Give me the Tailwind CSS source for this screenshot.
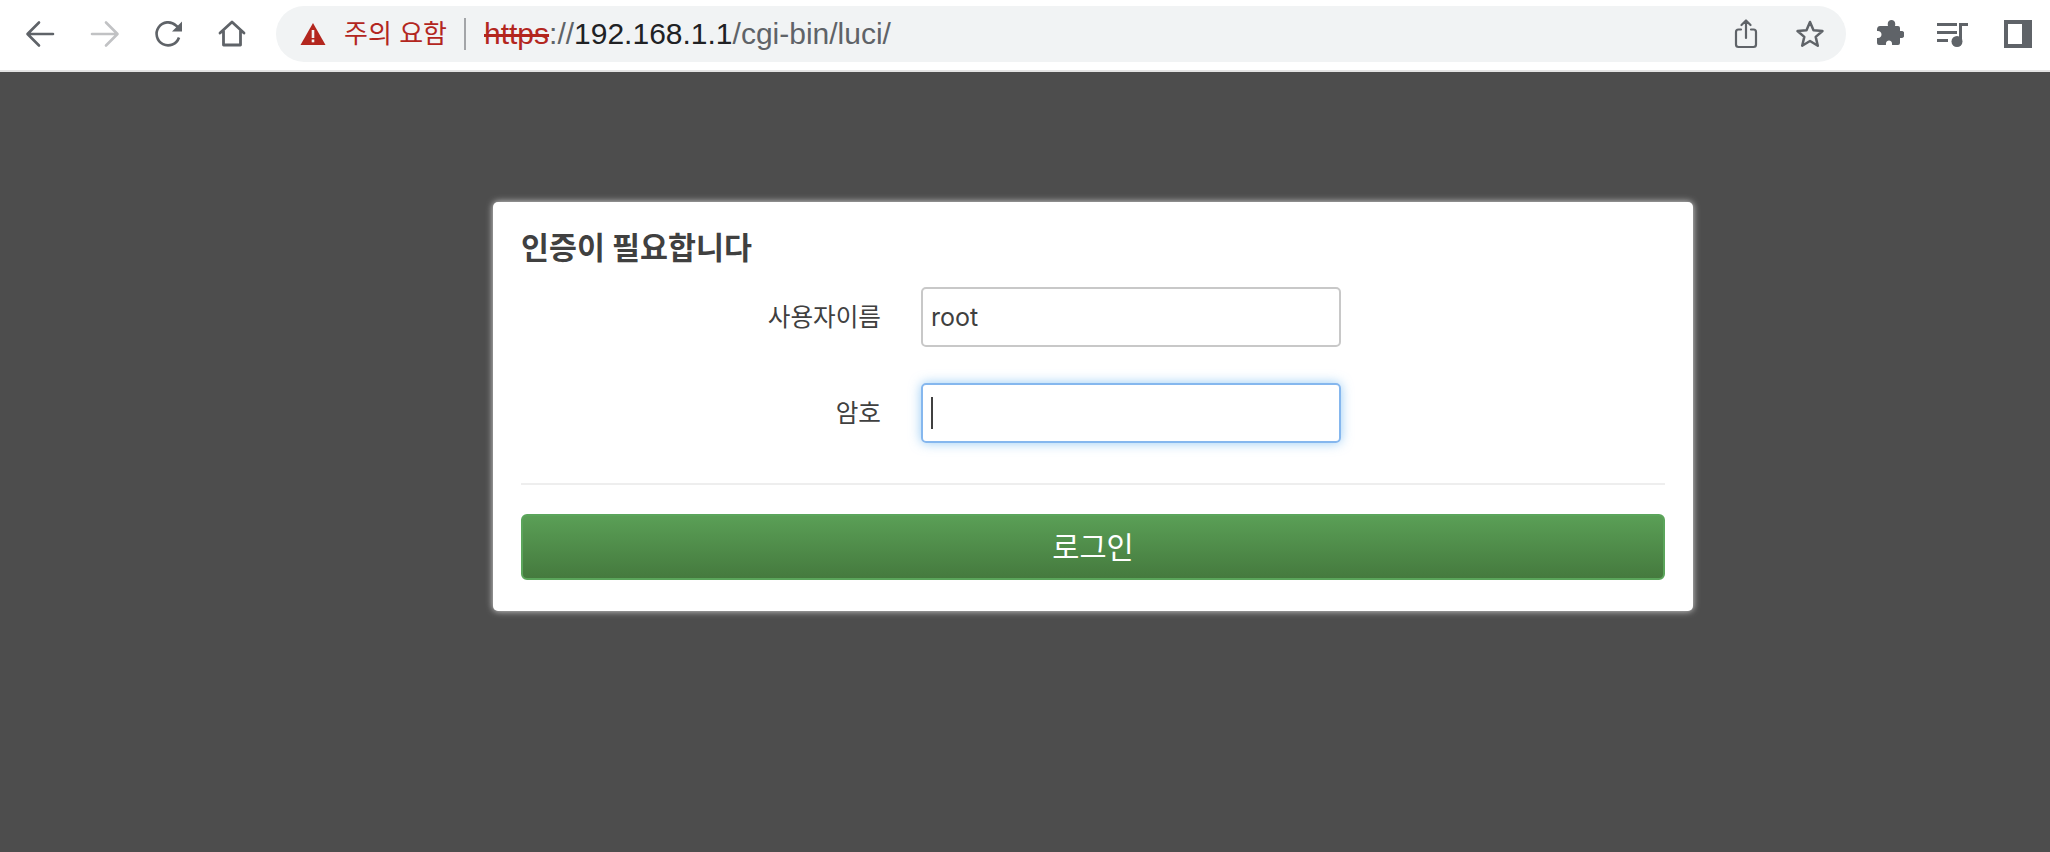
<!DOCTYPE html>
<html lang="ko">
<head>
  <meta charset="UTF-8" />
  <title>LuCI</title>
  <script src="https://cdn.jsdelivr.net/npm/@tailwindcss/browser@4"></script>
</head>
<body class="h-[852px] overflow-hidden flex flex-col bg-[#4d4d4d] font-['Inter','Noto_Sans_CJK_KR',sans-serif]">

  <!-- Browser toolbar -->
  <header class="h-[72px] shrink-0 bg-white border-b-2 border-[#e3e3e3] flex items-center pb-[2px]">
    <div class="w-[276px] shrink-0 flex items-center">
      <svg class="w-[30px] h-[30px] ml-[25px]" viewBox="0 0 30 30" fill="none" stroke="#5f6368" stroke-width="2.600" stroke-linecap="round" stroke-linejoin="round"><path d="M28 15H3M14 3.500 2.500 15 14 26.500" /></svg>
      <svg class="w-[30px] h-[30px] ml-[35px]" viewBox="0 0 30 30" fill="none" stroke="#c1c2c4" stroke-width="2.600" stroke-linecap="round" stroke-linejoin="round"><path d="M2 15h25M16 3.500 27.500 15 16 26.500" /></svg>
      <svg class="w-[30px] h-[30px] ml-[34px]" viewBox="0 0 30 30" fill="none"><path d="M25 18.500A11.500 11.500 0 1 1 22 6.500L26 10" stroke="#5f6368" stroke-width="2.600" /><path d="M28 2.500V12.500H18Z" fill="#5f6368" /></svg>
      <svg class="w-[30px] h-[30px] ml-[33px]" viewBox="0 0 30 30" fill="none" stroke="#5f6368" stroke-width="2.800" stroke-linecap="round" stroke-linejoin="round"><path d="M3 14 15 3 27 14M6.500 12V26H23.500V12" /></svg>
    </div>

    <!-- Omnibox -->
    <div class="w-[1570px] h-[56px] shrink-0 rounded-full bg-[#f1f3f4] flex items-center">
      <svg class="w-[26px] h-[24px] ml-[24px] shrink-0" viewBox="0 0 26 24"><path fill="#b3261e" d="M13 1 25.500 23H.5Z" /><rect x="11.700" y="8" width="2.600" height="8" fill="#f1f3f4" /><rect x="11.700" y="17.500" width="2.600" height="2.800" fill="#f1f3f4" /></svg>
      <span class="ml-[18px] text-[26px] leading-none text-[#b3261e]">주의 요함</span>
      <span class="ml-[17px] w-[2px] h-[32px] bg-[#a3a5a8]"></span>
      <div class="ml-[18px] font-['Liberation_Sans','Noto_Sans_CJK_KR',sans-serif] text-[30px] leading-none text-[#5f6368] whitespace-nowrap"><span class="text-[#b3261e] line-through">https</span>://<span class="text-[#202124]">192.168.1.1</span>/cgi-bin/luci/</div>
      <svg class="w-[24px] h-[30px] ml-auto shrink-0" viewBox="0 0 24 30" fill="none" stroke="#5f6368" stroke-width="2.200" stroke-linecap="round" stroke-linejoin="round"><path d="M7 10.500H4.500A2.500 2.500 0 0 0 2 13V25.500A2.500 2.500 0 0 0 4.500 28H19.500A2.500 2.500 0 0 0 22 25.500V13A2.500 2.500 0 0 0 19.500 10.500H17M12 19V2M7.500 6 12 1.500 16.500 6" /></svg>
      <svg class="w-[30px] h-[30px] ml-[37px] mr-[21px] shrink-0" viewBox="0 0 30 30" fill="none" stroke="#5f6368" stroke-width="2.500" stroke-linejoin="round"><path d="M15 3 18.500 11.300 27.500 12 20.700 17.900 22.800 26.700 15 22 7.200 26.700 9.300 17.900 2.500 12 11.500 11.300Z" /></svg>
    </div>

    <!-- Extensions and side panel -->
    <div class="flex-1 flex items-center">
      <svg class="w-[30px] h-[30px] ml-[28px]" viewBox="0 0 30 30" fill="#5f6368"><path d="M10 7H14C13 3 15 1 17.500 1S22 3 21 7H24A2 2 0 0 1 26 9V12C30 11.500 30.500 13.500 30.500 15.500S29 19.500 26 19V24A2 2 0 0 1 24 26H18C18.500 22.500 16.500 21.500 15 21.500S11.500 22.500 12 26H5A2 2 0 0 1 3 24V19C5.500 19.500 7.500 18 7.500 15.500S5.500 11.500 3 12V10Q3.500 7 6 7Z" /></svg>
      <svg class="w-[32px] h-[26px] ml-[33px]" viewBox="0 0 32 26" fill="#5f6368"><rect x="0" y="2" width="20" height="3" /><rect x="0" y="10" width="20" height="3" /><rect x="0" y="18" width="11" height="3" /><rect x="22" y="2" width="9" height="3" /><rect x="22" y="2" width="3" height="20" /><circle cx="20" cy="20.500" r="5.500" /></svg>
      <div class="w-[28px] h-[28px] ml-[35px] border-[4px] border-r-[10px] border-[#5f6368] bg-white"></div>
    </div>
  </header>

  <!-- Login page -->
  <main class="flex-1 pt-[130px] pl-[493px]">
    <form class="w-[1200px] h-[409px] bg-white rounded-[5px] px-[28px] pt-[28px] shadow-[0_0_7px_rgba(255,255,255,0.8)] text-[#404040]">
      <h1 class="text-[30.400px] leading-[37px] font-bold text-[#404040]">인증이 필요합니다</h1>

      <div class="mt-[20px] flex flex-col gap-[36px]">
        <div class="flex items-center">
          <label class="w-[360px] text-right text-[24.600px] leading-none">사용자이름</label>
          <div class="ml-[40px] w-[420px] h-[60px] rounded-[5px] border-2 border-[#c8c8c8] flex items-center pl-[8px] pt-[1px] text-[25px]">root</div>
        </div>
        <div class="flex items-center">
          <label class="w-[360px] text-right text-[24.600px] leading-none">암호</label>
          <div class="ml-[40px] w-[420px] h-[60px] rounded-[5px] border-2 border-[#85b7ee] shadow-[0_0_12px_rgba(82,168,236,0.6)] flex items-center pl-[8px]">
            <span class="w-[2px] h-[32px] bg-[#404040]"></span>
          </div>
        </div>
      </div>

      <hr class="mt-[40px] border-t-2 border-[#eeeeee]" />

      <button type="button" class="mt-[29px] w-full h-[66px] rounded-[6px] border-2 border-[#5ba55b] bg-gradient-to-b from-[#5a9f56] to-[#457a3e] text-white text-[29.500px]">로그인</button>
    </form>
  </main>

</body>
</html>
